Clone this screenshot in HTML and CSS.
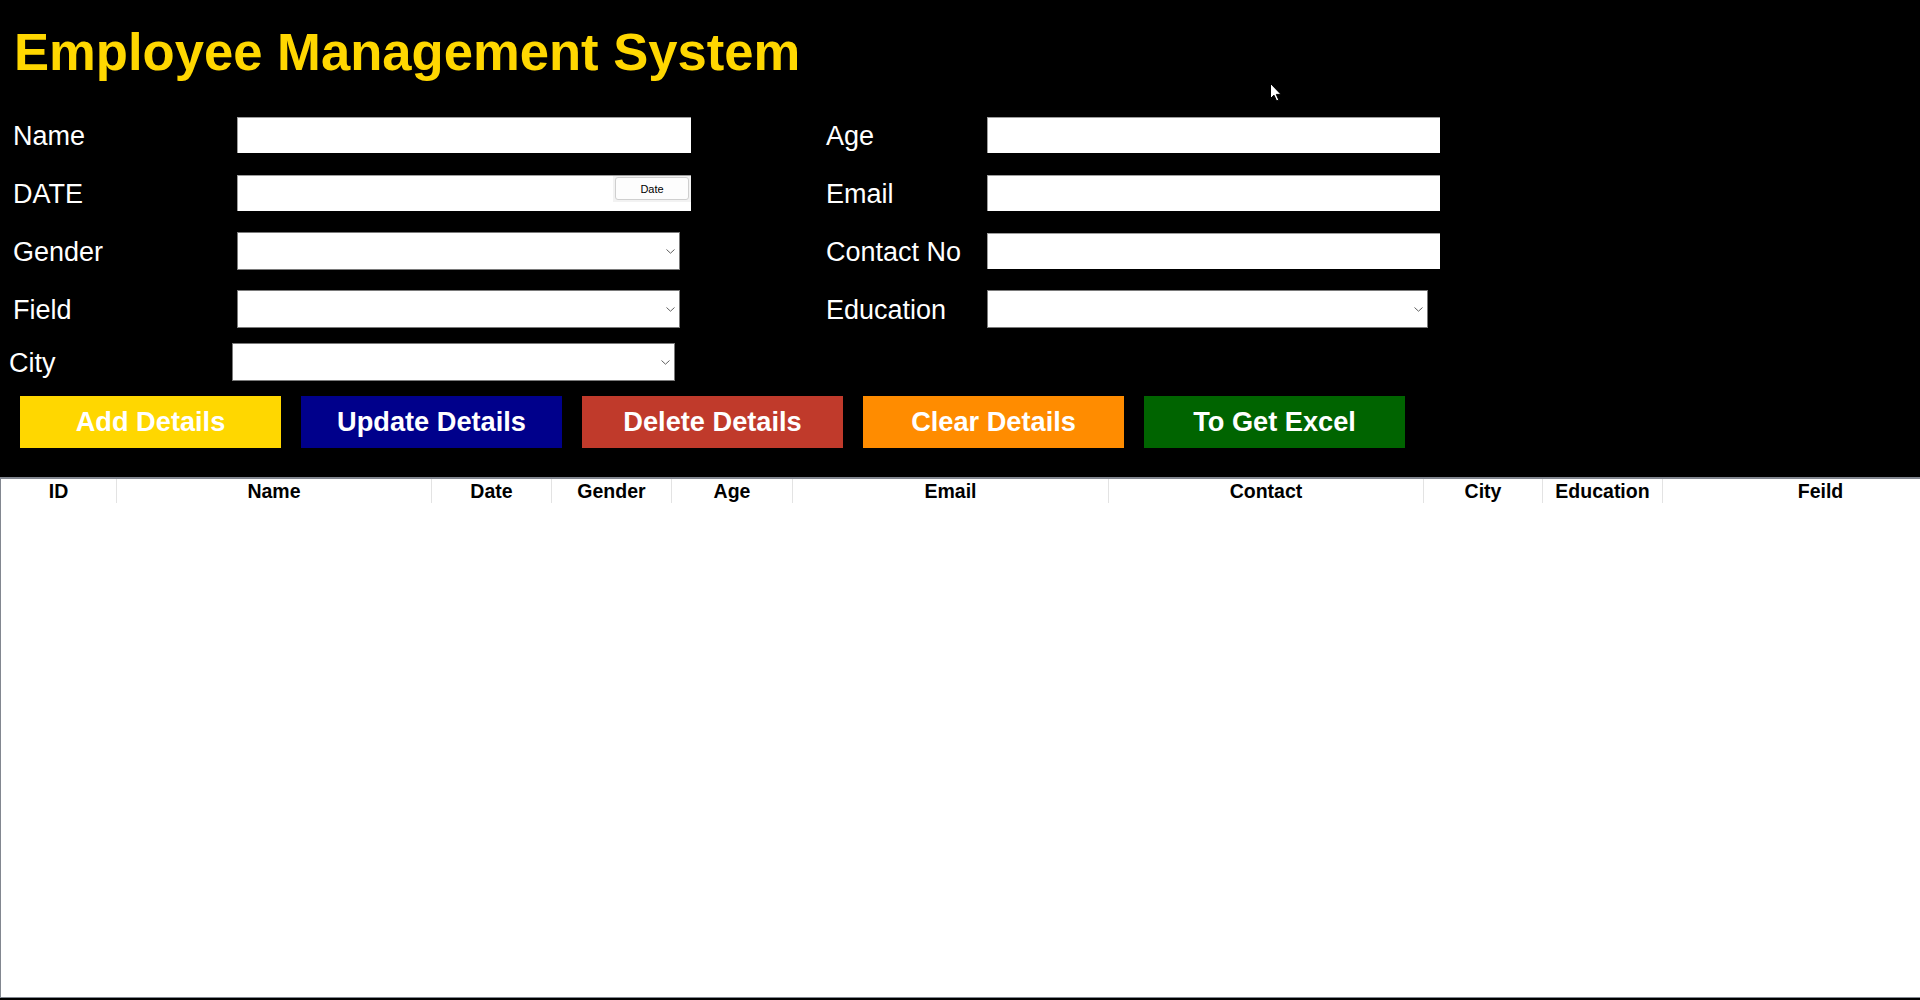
FILE: index.html
```html
<!DOCTYPE html>
<html lang="en">
<head>
<meta charset="utf-8">
<title>Employee Management System</title>
<link rel="stylesheet" href="styles.css">
</head>
<body>
<div class="page">
  <h1 class="title">Employee Management System</h1>

  <div class="form-grid">
    <label class="lbl">Name</label>
    <div class="cell"><input class="txt w-left" type="text"></div>
    <label class="lbl">Age</label>
    <div class="cell"><input class="txt w-right" type="text"></div>

    <label class="lbl">DATE</label>
    <div class="cell">
      <div class="date-field">
        <input class="date-input" type="text">
        <div class="date-btn-bg"><button class="date-btn" type="button">Date</button></div>
      </div>
    </div>
    <label class="lbl">Email</label>
    <div class="cell"><input class="txt w-right" type="text"></div>

    <label class="lbl">Gender</label>
    <div class="cell">
      <div class="select sel-left">
        <select class="select-el"><option></option></select>
        <svg class="chev" width="9" height="5" viewBox="0 0 9 5"><path d="M0.5 0.5 L4.5 4.2 L8.5 0.5" fill="none" stroke="#606060" stroke-width="1"/></svg>
      </div>
    </div>
    <label class="lbl">Contact No</label>
    <div class="cell"><input class="txt w-right" type="text"></div>

    <label class="lbl">Field</label>
    <div class="cell">
      <div class="select sel-left">
        <select class="select-el"><option></option></select>
        <svg class="chev" width="9" height="5" viewBox="0 0 9 5"><path d="M0.5 0.5 L4.5 4.2 L8.5 0.5" fill="none" stroke="#606060" stroke-width="1"/></svg>
      </div>
    </div>
    <label class="lbl">Education</label>
    <div class="cell">
      <div class="select sel-right">
        <select class="select-el"><option></option></select>
        <svg class="chev" width="9" height="5" viewBox="0 0 9 5"><path d="M0.5 0.5 L4.5 4.2 L8.5 0.5" fill="none" stroke="#606060" stroke-width="1"/></svg>
      </div>
    </div>
  </div>

  <div class="city-row">
    <label class="lbl city-lbl">City</label>
    <div class="select sel-left">
      <select class="select-el"><option></option></select>
      <svg class="chev" width="9" height="5" viewBox="0 0 9 5"><path d="M0.5 0.5 L4.5 4.2 L8.5 0.5" fill="none" stroke="#606060" stroke-width="1"/></svg>
    </div>
  </div>

  <div class="actions">
    <button class="btn btn-add" type="button">Add Details</button>
    <button class="btn btn-update" type="button">Update Details</button>
    <button class="btn btn-delete" type="button">Delete Details</button>
    <button class="btn btn-clear" type="button">Clear Details</button>
    <button class="btn btn-excel" type="button">To Get Excel</button>
  </div>

  <div class="grid-view">
    <div class="grid-head">
      <div class="th">ID</div>
      <div class="th">Name</div>
      <div class="th">Date</div>
      <div class="th">Gender</div>
      <div class="th">Age</div>
      <div class="th">Email</div>
      <div class="th">Contact</div>
      <div class="th">City</div>
      <div class="th">Education</div>
      <div class="th">Feild</div>
    </div>
  </div>
</div>

<svg class="cursor" width="13" height="19" viewBox="0 0 13 19">
  <path d="M0.5 0.5 L0.5 15.5 L4 12.2 L6.6 18 L8.8 17 L6.3 11.4 L11 11.4 Z" fill="#ffffff" stroke="#000000" stroke-width="1" stroke-linejoin="miter"/>
</svg>
</body>
</html>
```

FILE: styles.css
```css
* {
  box-sizing: border-box;
}

html, body {
  margin: 0;
  padding: 0;
  background: #000000;
  width: 1920px;
  height: 1000px;
  overflow: hidden;
}

body {
  font-family: "Liberation Sans", Arial, sans-serif;
  color: #ffffff;
  position: relative;
}

.page {
  padding-top: 22px;
}

.title {
  margin: 0;
  padding-left: 14px;
  font-size: 52.6px;
  line-height: 60px;
  font-weight: bold;
  color: #ffd700;
}

.form-grid {
  margin-top: 34px;
  padding-left: 12px;
  display: grid;
  grid-template-columns: 225px 588px 162px 453px;
  grid-auto-rows: 38px;
  row-gap: 20px;
  align-items: center;
}

.form-grid .lbl {
  padding-left: 1px;
}

.cell {
  display: flex;
  align-items: center;
  height: 38px;
}

.lbl {
  font-size: 27px;
  line-height: 30px;
  padding-top: 1px;
  color: #ffffff;
  white-space: nowrap;
}

.txt {
  display: block;
  height: 36px;
  margin: 0;
  padding: 0 4px;
  border: none;
  border-top: 1px solid #9c9c9c;
  border-left: 1px solid #9c9c9c;
  background: #ffffff;
  outline: none;
  font-family: "Liberation Sans", Arial, sans-serif;
  font-size: 20px;
}

.w-left {
  width: 454px;
}

.w-right {
  width: 453px;
}

.date-field {
  width: 454px;
  height: 36px;
  display: flex;
  align-items: flex-start;
  background: #ffffff;
  border-top: 1px solid #9c9c9c;
  border-left: 1px solid #9c9c9c;
}

.date-input {
  flex: 1;
  height: 34px;
  border: none;
  outline: none;
  background: transparent;
  min-width: 0;
}

.date-btn-bg {
  width: 78px;
  height: 26px;
  background: #f2f2f2;
  padding: 1px 2px 1px 1px;
  display: flex;
  justify-content: flex-end;
}

.date-btn {
  width: 74px;
  height: 23px;
  margin: 0;
  padding: 0;
  border: 1px solid #cfcfcf;
  border-radius: 3px;
  background: #fdfdfd;
  font-family: "Liberation Sans", Arial, sans-serif;
  font-size: 11px;
  color: #000000;
}

.select {
  position: relative;
  height: 38px;
  background: #ffffff;
  border: 1px solid #7a7a7a;
}

.sel-left {
  width: 443px;
}

.sel-right {
  width: 441px;
}

.select-el {
  appearance: none;
  -webkit-appearance: none;
  width: 100%;
  height: 100%;
  border: none;
  outline: none;
  background: transparent;
  margin: 0;
  padding: 0 6px;
}

.chev {
  position: absolute;
  right: 4px;
  top: 16px;
}

.city-row {
  margin-top: 15px;
  padding-left: 9px;
  height: 38px;
  display: flex;
  align-items: center;
}

.city-lbl {
  width: 223px;
}

.actions {
  margin-top: 15px;
  padding-left: 20px;
  display: flex;
  gap: 20px;
}

.btn {
  width: 261px;
  height: 52px;
  margin: 0;
  padding: 0;
  border: none;
  font-family: "Liberation Sans", Arial, sans-serif;
  font-size: 27.2px;
  font-weight: bold;
  color: #ffffff;
  text-align: center;
}

.btn-add {
  background: #ffd700;
}

.btn-update {
  background: #00008b;
}

.btn-delete {
  background: #c03a2b;
}

.btn-clear {
  background: #ff8c00;
}

.btn-excel {
  background: #006400;
}

.grid-view {
  margin-top: 29px;
  width: 1920px;
  height: 521px;
  background: #ffffff;
  border-top: 2px solid #828790;
  border-left: 1px solid #828790;
  border-bottom: 1px solid #828790;
  overflow: hidden;
}

.grid-head {
  display: grid;
  width: max-content;
  grid-template-columns: 116px 315px 120px 120px 121px 316px 315px 119px 120px 316px;
  height: 24px;
}

.th {
  border-right: 1px solid #e3e3e3;
  text-align: center;
  font-size: 19.5px;
  line-height: 24px;
  font-weight: bold;
  color: #000000;
  white-space: nowrap;
}

.cursor {
  position: absolute;
  left: 1270px;
  top: 83px;
}
```
